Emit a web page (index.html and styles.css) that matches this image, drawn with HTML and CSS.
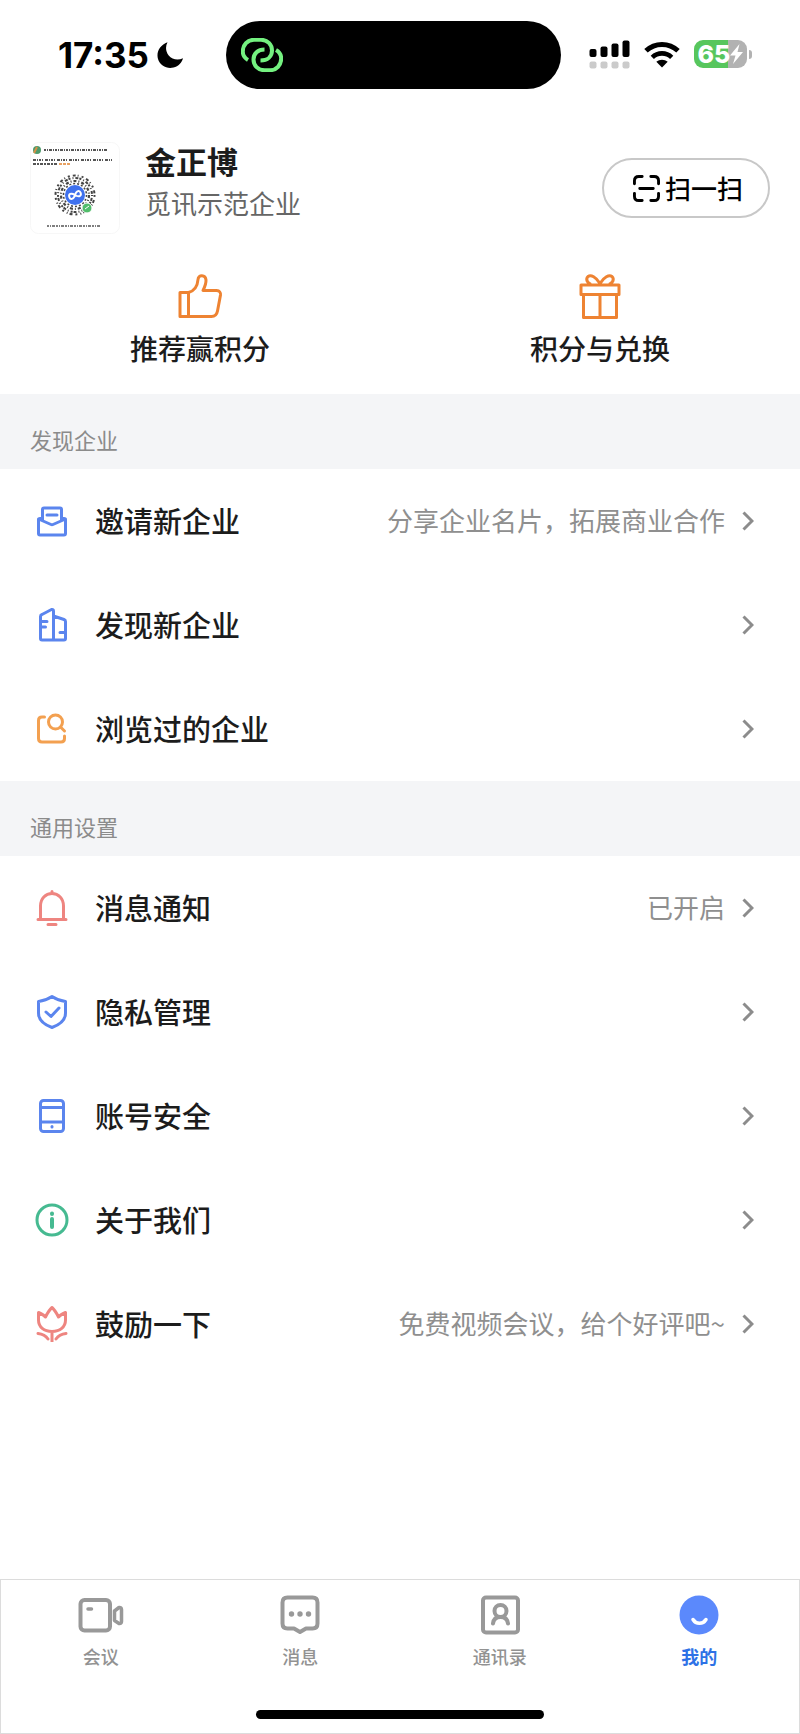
FILE: index.html
```html
<!DOCTYPE html>
<html lang="zh-CN">
<head>
<meta charset="utf-8">
<meta name="viewport" content="width=device-width, initial-scale=1">
<title>我的</title>
<link rel="stylesheet" href="styles.css">
</head>
<body>
<div class="screen">
  <div class="status">
    <div class="status-side status-left">
      <span class="clock">17:35</span>
      <svg class="moon" viewBox="0 0 26 26" aria-hidden="true"><path d="M10.500 0.300C3 3 -1 10 1 17C3 24 10 27 16.500 25.500C21.500 24.300 25 20.500 26 16.200C21 18.700 15 17.500 11.700 13.500C8.500 9.500 8.300 4.500 10.500 0.300Z"/></svg>
    </div>
    <div class="island">
      <svg class="link-icon" viewBox="0 0 42 34" aria-hidden="true"><path d="M7 22C3.500 20 1.800 17 1.800 13.500C1.800 7 6.500 1.800 13 1.800H20C26.500 1.800 31 6.500 31 12.500C31 18.500 26.500 22.500 19.500 22.500"/><path d="M35 12C38.500 14 40.200 17 40.200 20.500C40.200 27 35.500 32.200 29 32.200H23.500C17 32.200 12.500 27.500 12.500 21.500C12.500 15.500 17 11.500 23.500 11.500"/></svg>
    </div>
    <div class="status-side status-right">
      <svg class="signal" viewBox="0 0 42 29" aria-hidden="true"><rect x="0.500" y="9" width="7" height="8" rx="2"/><rect x="11.500" y="6.500" width="7" height="10.500" rx="2"/><rect x="22.500" y="3.500" width="7" height="13.500" rx="2"/><rect x="33.500" y="0.500" width="7" height="16.500" rx="2"/><g fill="#cbcbcb"><rect x="0.500" y="21.500" width="7" height="7" rx="2"/><rect x="11.500" y="21.500" width="7" height="7" rx="2"/><rect x="22.500" y="21.500" width="7" height="7" rx="2"/><rect x="33.500" y="21.500" width="7" height="7" rx="2"/></g></svg>
      <svg class="wifi" viewBox="0 0 36 27" aria-hidden="true"><path d="M2 9.800C11 1.300 25 1.300 34 9.800" fill="none" stroke="#000" stroke-width="5"/><path d="M8.300 16.300C13.800 11 22.200 11 27.700 16.300" fill="none" stroke="#000" stroke-width="4.600"/><path d="M18 26.500L12.300 20.800C15.500 18 20.500 18 23.700 20.800Z"/></svg>
      <div class="battery">
        <div class="battery-body"><span>65</span><svg viewBox="0 0 13 20" aria-hidden="true"><path d="M9.500 0L0 11.500H5.500L3 20L13 8H7.500Z"/></svg></div>
        <div class="battery-cap"></div>
      </div>
    </div>
  </div>

  <header class="profile">
    <svg class="avatar" viewBox="0 0 90 92" role="img" aria-label="企业小程序码">
      <rect x="0.500" y="0.500" width="89" height="91" rx="8" fill="#fff" stroke="#f7f7f7"/>
      <circle cx="7" cy="8" r="4" fill="#4e9a6b"/><path d="M4 11L7 5" stroke="#d78f45" stroke-width="2"/>
      <g stroke="#555" fill="none"><path d="M14 8H78" stroke-width="2" stroke-dasharray="2 1 1 1 3 1 1 1"/><path d="M3 18H82" stroke-width="1.800" stroke-dasharray="3 1 1 1 2 1 1 2"/><path d="M3 22H28" stroke-width="1.800" stroke-dasharray="3 1 2 1"/><path d="M17 84H70" stroke-width="1.500" stroke-dasharray="2 1 1 1 3 1"/></g>
      <path d="M29 22H41" stroke="#e8a263" stroke-width="2" stroke-dasharray="3 1"/>
      <g stroke="#444" fill="none"><circle cx="45" cy="53" r="19.500" stroke-width="2" stroke-dasharray="2 3 3 2 1 3"/><circle cx="45" cy="53" r="17" stroke-width="2" stroke-dasharray="1 2 3 1 2 2"/><circle cx="45" cy="53" r="14" stroke-width="2.200" stroke-dasharray="3 2 1 2"/><circle cx="45" cy="53" r="11.500" stroke-width="1.500" stroke-dasharray="2 2"/></g>
      <circle cx="45" cy="53" r="10" fill="#3f71ee"/><path d="M45 53C42 49 39 50 39 53S42 57 45 53S51 50 51 53S48 57 45 53" fill="none" stroke="#fff" stroke-width="2" transform="rotate(-20 45 53)"/>
      <circle cx="57" cy="66" r="5" fill="#52bd6b" stroke="#fff"/><path d="M55 67L59 64" stroke="#fff"/>
    </svg>
    <div class="identity">
      <h1>金正博</h1>
      <p>觅讯示范企业</p>
    </div>
    <button class="scan" type="button">
      <svg viewBox="0 0 28 28" aria-hidden="true"><path d="M1.500 9V6Q1.500 1.500 6 1.500H9.500M18.500 1.500H22Q26.500 1.500 26.500 6V9M26.500 19V22Q26.500 26.500 22 26.500H18.500M9.500 26.500H6Q1.500 26.500 1.500 22V19M7 14H21"/></svg>
      扫一扫
    </button>
  </header>

  <nav class="shortcuts" aria-label="积分">
    <a href="#recommend">
      <svg viewBox="0 0 46 46" aria-hidden="true"><path d="M3 19.500H11.500V43.500H3ZM11.500 19.500C17 18 20.500 13 21 6.500C21.200 1.300 28.500 1.300 29 7C29.200 11 27.500 14.500 26 17.500H39.500Q44 18 43.500 22L40.500 38Q39.500 43.500 34.500 43.500H11.500"/></svg>
      <span>推荐赢积分</span>
    </a>
    <a href="#redeem">
      <svg viewBox="0 0 46 46" aria-hidden="true"><path d="M4 12H42V21.500H4ZM6.500 21.500H39.500V44.500H6.500ZM23 21.500V44.500M23 10.500C19 4 14 1.500 11 3.500C8.500 6 10 10 14 11.500M23 10.500C27 4 32 1.500 35 3.500C37.500 6 36 10 32 11.500"/></svg>
      <span>积分与兑换</span>
    </a>
  </nav>

  <section>
    <h2>发现企业</h2>
    <ul class="list">
      <li><a href="#invite">
        <svg class="icon blue" viewBox="0 0 36 36" aria-hidden="true"><path d="M7.500 15.500H6Q4.500 15.500 4.500 17V30.500Q4.500 32 6 32H30Q31.500 32 31.500 30.500V17Q31.500 15.500 30 15.500H28.500M4.500 16L17 21.500Q18 22 19 21.500L31.500 16M8.500 17.500V6.500Q8.500 5 10 5H26Q27.500 5 27.500 6.500V17.500M13 12H23"/></svg>
        <span class="label">邀请新企业</span><span class="note">分享企业名片，拓展商业合作</span>
        <svg class="chevron" viewBox="0 0 12 20" aria-hidden="true"><path d="M1.500 1.500L10 10L1.500 18.500"/></svg></a></li>
      <li><a href="#discover">
        <svg class="icon blue" viewBox="0 0 36 36" aria-hidden="true"><path d="M19.500 33H8Q6.500 33 6.500 31.500V9.500Q6.500 8 8 7.500L17.500 2.500Q19.500 2 19.500 4V33H30Q31.500 33 31.500 31.500V14.500Q31.500 13 30 12.500L19.500 9M7 14.500H13M7 20H11.500M31 25.500H26"/></svg>
        <span class="label">发现新企业</span>
        <svg class="chevron" viewBox="0 0 12 20" aria-hidden="true"><path d="M1.500 1.500L10 10L1.500 18.500"/></svg></a></li>
      <li><a href="#visited">
        <svg class="icon orange" viewBox="0 0 36 36" aria-hidden="true"><path d="M10.500 6H8Q4.500 6 4.500 9.500V27.500Q4.500 31 8 31H27Q30.500 31 30.500 27.500V25M26.500 16L30.500 20"/><circle cx="21.500" cy="11" r="7"/></svg>
        <span class="label">浏览过的企业</span>
        <svg class="chevron" viewBox="0 0 12 20" aria-hidden="true"><path d="M1.500 1.500L10 10L1.500 18.500"/></svg></a></li>
    </ul>
  </section>

  <section>
    <h2>通用设置</h2>
    <ul class="list">
      <li><a href="#notice">
        <svg class="icon red" viewBox="0 0 36 36" aria-hidden="true"><path d="M4 29.500H32M6.500 29V16C6.500 8.500 11.500 3.500 18 3.500S29.500 8.500 29.500 16V29M18 1.500V3.500M14 34.500H22"/></svg>
        <span class="label">消息通知</span><span class="note">已开启</span>
        <svg class="chevron" viewBox="0 0 12 20" aria-hidden="true"><path d="M1.500 1.500L10 10L1.500 18.500"/></svg></a></li>
      <li><a href="#privacy">
        <svg class="icon blue" viewBox="0 0 36 36" aria-hidden="true"><path d="M18 2.500C22.500 5.500 27 7 31.500 7.500V19C31.500 26 25 31 18 33.500C11 31 4.500 26 4.500 19V7.500C9 7 13.500 5.500 18 2.500ZM12 18L17 22.500L25 14"/></svg>
        <span class="label">隐私管理</span>
        <svg class="chevron" viewBox="0 0 12 20" aria-hidden="true"><path d="M1.500 1.500L10 10L1.500 18.500"/></svg></a></li>
      <li><a href="#account">
        <svg class="icon blue" viewBox="0 0 36 36" aria-hidden="true"><rect x="6.500" y="2.500" width="23" height="31" rx="3"/><path d="M7 9.500H29M7 24H29M18 28.500V29"/></svg>
        <span class="label">账号安全</span>
        <svg class="chevron" viewBox="0 0 12 20" aria-hidden="true"><path d="M1.500 1.500L10 10L1.500 18.500"/></svg></a></li>
      <li><a href="#about">
        <svg class="icon green" viewBox="0 0 36 36" aria-hidden="true"><circle cx="18" cy="18" r="15"/><path d="M18 17V25M18 11.500V12" stroke-width="4"/></svg>
        <span class="label">关于我们</span>
        <svg class="chevron" viewBox="0 0 12 20" aria-hidden="true"><path d="M1.500 1.500L10 10L1.500 18.500"/></svg></a></li>
      <li><a href="#praise">
        <svg class="icon red" viewBox="0 0 36 36" aria-hidden="true"><path d="M4.500 6.500C8 8 10 9 11.500 11C13 8 15 4 18 1.500C21 4 23 8 24.500 11C26 9 28 8 31.500 6.500V14C31.500 21 26 25.500 18 25.500S4.500 21 4.500 14ZM18 25.500V35.500M4 27.500C9 28 12 30 14 33M32 27.500C27 28 24 30 22 33"/></svg>
        <span class="label">鼓励一下</span><span class="note">免费视频会议，给个好评吧~</span>
        <svg class="chevron" viewBox="0 0 12 20" aria-hidden="true"><path d="M1.500 1.500L10 10L1.500 18.500"/></svg></a></li>
    </ul>
  </section>

  <footer class="dock">
    <nav class="tabs" aria-label="主导航">
      <a href="#meeting"><svg viewBox="0 0 48 40" aria-hidden="true"><rect x="3.500" y="5" width="29.500" height="30.500" rx="4"/><path d="M11 14H14.500M37.500 16L42 12.500Q44.500 12 44.500 14.500V26.500Q44.500 29 42 28.500L37.500 25.500Z" stroke-width="3.500"/></svg><span>会议</span></a>
      <a href="#message"><svg viewBox="0 0 48 40" aria-hidden="true"><path d="M11.500 2.500H36.500Q41.500 2.500 41.500 7.500V28.500Q41.500 33.500 36.500 33.500H30L24 37L18 33.500H11.500Q6.500 33.500 6.500 28.500V7.500Q6.500 2.500 11.500 2.500Z"/><g fill="#999" stroke="none"><circle cx="15.500" cy="19" r="2.700"/><circle cx="24" cy="19" r="2.700"/><circle cx="32.500" cy="19" r="2.700"/></g></svg><span>消息</span></a>
      <a href="#contacts"><svg viewBox="0 0 48 40" aria-hidden="true"><rect x="7" y="2.500" width="35" height="35" rx="3"/><circle cx="24.500" cy="16" r="6"/><path d="M17 28.500C17.500 24 20 22 24.500 22S31.500 24 32 28.500"/></svg><span>通讯录</span></a>
      <a class="active" href="#me" aria-current="page"><svg viewBox="0 0 48 40" aria-hidden="true"><circle cx="24" cy="20" r="19.500" fill="#5b89fc" stroke="none"/><path d="M18 24.500C21 29.500 28 29.500 31 24.500" stroke="#fff" stroke-width="3.500"/></svg><span>我的</span></a>
    </nav>
    <div class="home-bar"></div>
  </footer>
</div>
</body>
</html>
```
FILE: styles.css
```css
* { box-sizing: border-box; }
body {
  margin: 0;
  background: #fff;
  color: #1c1c1c;
  font-family: "Noto Sans CJK SC", "Noto Sans", sans-serif;
}
a { color: inherit; text-decoration: none; }
h1, h2, p, ul { margin: 0; padding: 0; }
ul { list-style: none; }

.screen {
  display: flex;
  flex-direction: column;
  min-height: 100vh;
}

.status {
  display: grid;
  grid-template-columns: 7fr 14fr 8fr;
  align-items: center;
  padding: 21px 48px 0 58px;
}
.status-side { display: flex; align-items: center; }
.clock {
  font: 700 35px/40px Inter, sans-serif;
  color: #000;
}
.moon { width: 26px; height: 26px; margin-left: 8px; }
.island {
  display: flex;
  align-items: center;
  height: 68px;
  padding-left: 15px;
  border-radius: 34px;
  background: #000;
}
.link-icon {
  width: 42px;
  height: 34px;
  fill: none;
  stroke: #74f180;
  stroke-width: 4;
}
.status-right { justify-content: flex-end; padding-bottom: 2px; }
.signal { width: 42px; height: 29px; }
.wifi { width: 36px; height: 27px; margin: 0 14px 0 13px; }
.battery { display: flex; align-items: center; gap: 2px; }
.battery-body {
  display: flex;
  align-items: center;
  justify-content: center;
  width: 53px;
  height: 28px;
  border-radius: 9px;
  background: linear-gradient(90deg, #57c65d 65%, #b2b2b2 65%);
  color: #fff;
  font: 800 25px/28px Inter, sans-serif;
}
.battery-body svg { width: 13px; height: 20px; fill: #fff; }
.battery-cap {
  width: 3px;
  height: 9px;
  border-radius: 0 3px 3px 0;
  background: #b2b2b2;
}

.profile {
  display: flex;
  align-items: center;
  padding: 53px 30px 0;
}
.avatar { width: 90px; height: 92px; }
.identity { flex: 1; margin-left: 25px; padding-bottom: 8px; }
.identity h1 { font-size: 31px; line-height: 38px; font-weight: 700; }
.identity p { font-size: 26px; line-height: 46px; color: #666; }
.scan {
  display: flex;
  align-items: center;
  justify-content: center;
  gap: 5px;
  width: 168px;
  height: 60px;
  padding: 0 0 0 4px;
  border: 2px solid #c8c8c8;
  border-radius: 30px;
  background: #fff;
  color: #000;
  font: 500 26px/36px "Noto Sans CJK SC", sans-serif;
}
.scan svg {
  width: 27px;
  height: 27px;
  fill: none;
  stroke: #000;
  stroke-width: 3;
  stroke-linecap: round;
}

.shortcuts {
  display: grid;
  grid-template-columns: 1fr 1fr;
  padding: 39px 0 26px;
}
.shortcuts a {
  display: flex;
  flex-direction: column;
  align-items: center;
  gap: 9px;
  font-size: 28px;
  line-height: 40px;
  font-weight: 500;
}
.shortcuts svg {
  width: 46px;
  height: 46px;
  fill: none;
  stroke: #ee8332;
  stroke-width: 3;
  stroke-linejoin: round;
}

h2 {
  padding: 29px 30px 14px;
  background: #f4f5f7;
  color: #8b8b8b;
  font-size: 22px;
  line-height: 32px;
  font-weight: 400;
}
.list a {
  display: flex;
  align-items: center;
  height: 104px;
  padding: 0 46px 0 34px;
}
.icon {
  width: 36px;
  height: 36px;
  fill: none;
  stroke: currentColor;
  stroke-width: 3;
  stroke-linecap: round;
  stroke-linejoin: round;
}
.blue { color: #5b85ee; }
.orange { color: #f3a050; }
.red { color: #ee8580; }
.green { color: #46ba91; }
.label {
  flex: 1;
  margin-left: 25px;
  padding-bottom: 2px;
  font-size: 29px;
  line-height: 40px;
  font-weight: 500;
}
.note {
  padding-bottom: 2px;
  color: #8f8f8f;
  font-size: 26px;
  line-height: 40px;
}
.chevron {
  width: 12px;
  height: 20px;
  margin-left: 17px;
  fill: none;
  stroke: #8c8c8c;
  stroke-width: 3;
}

.dock {
  margin-top: auto;
  padding: 15px 0 14px;
  border: 1px solid #dcdcdc;
}
.tabs { display: grid; grid-template-columns: repeat(4, 1fr); }
.tabs a {
  display: flex;
  flex-direction: column;
  align-items: center;
  gap: 7px;
  color: #929292;
  font-size: 18px;
  line-height: 28px;
  font-weight: 500;
}
.tabs svg {
  width: 48px;
  height: 40px;
  fill: none;
  stroke: #999;
  stroke-width: 4;
  stroke-linecap: round;
  stroke-linejoin: round;
}
.tabs .active { color: #2e72e6; font-weight: 700; }
.home-bar {
  width: 36%;
  height: 9px;
  margin: 40px auto 0;
  border-radius: 5px;
  background: #000;
}
```
